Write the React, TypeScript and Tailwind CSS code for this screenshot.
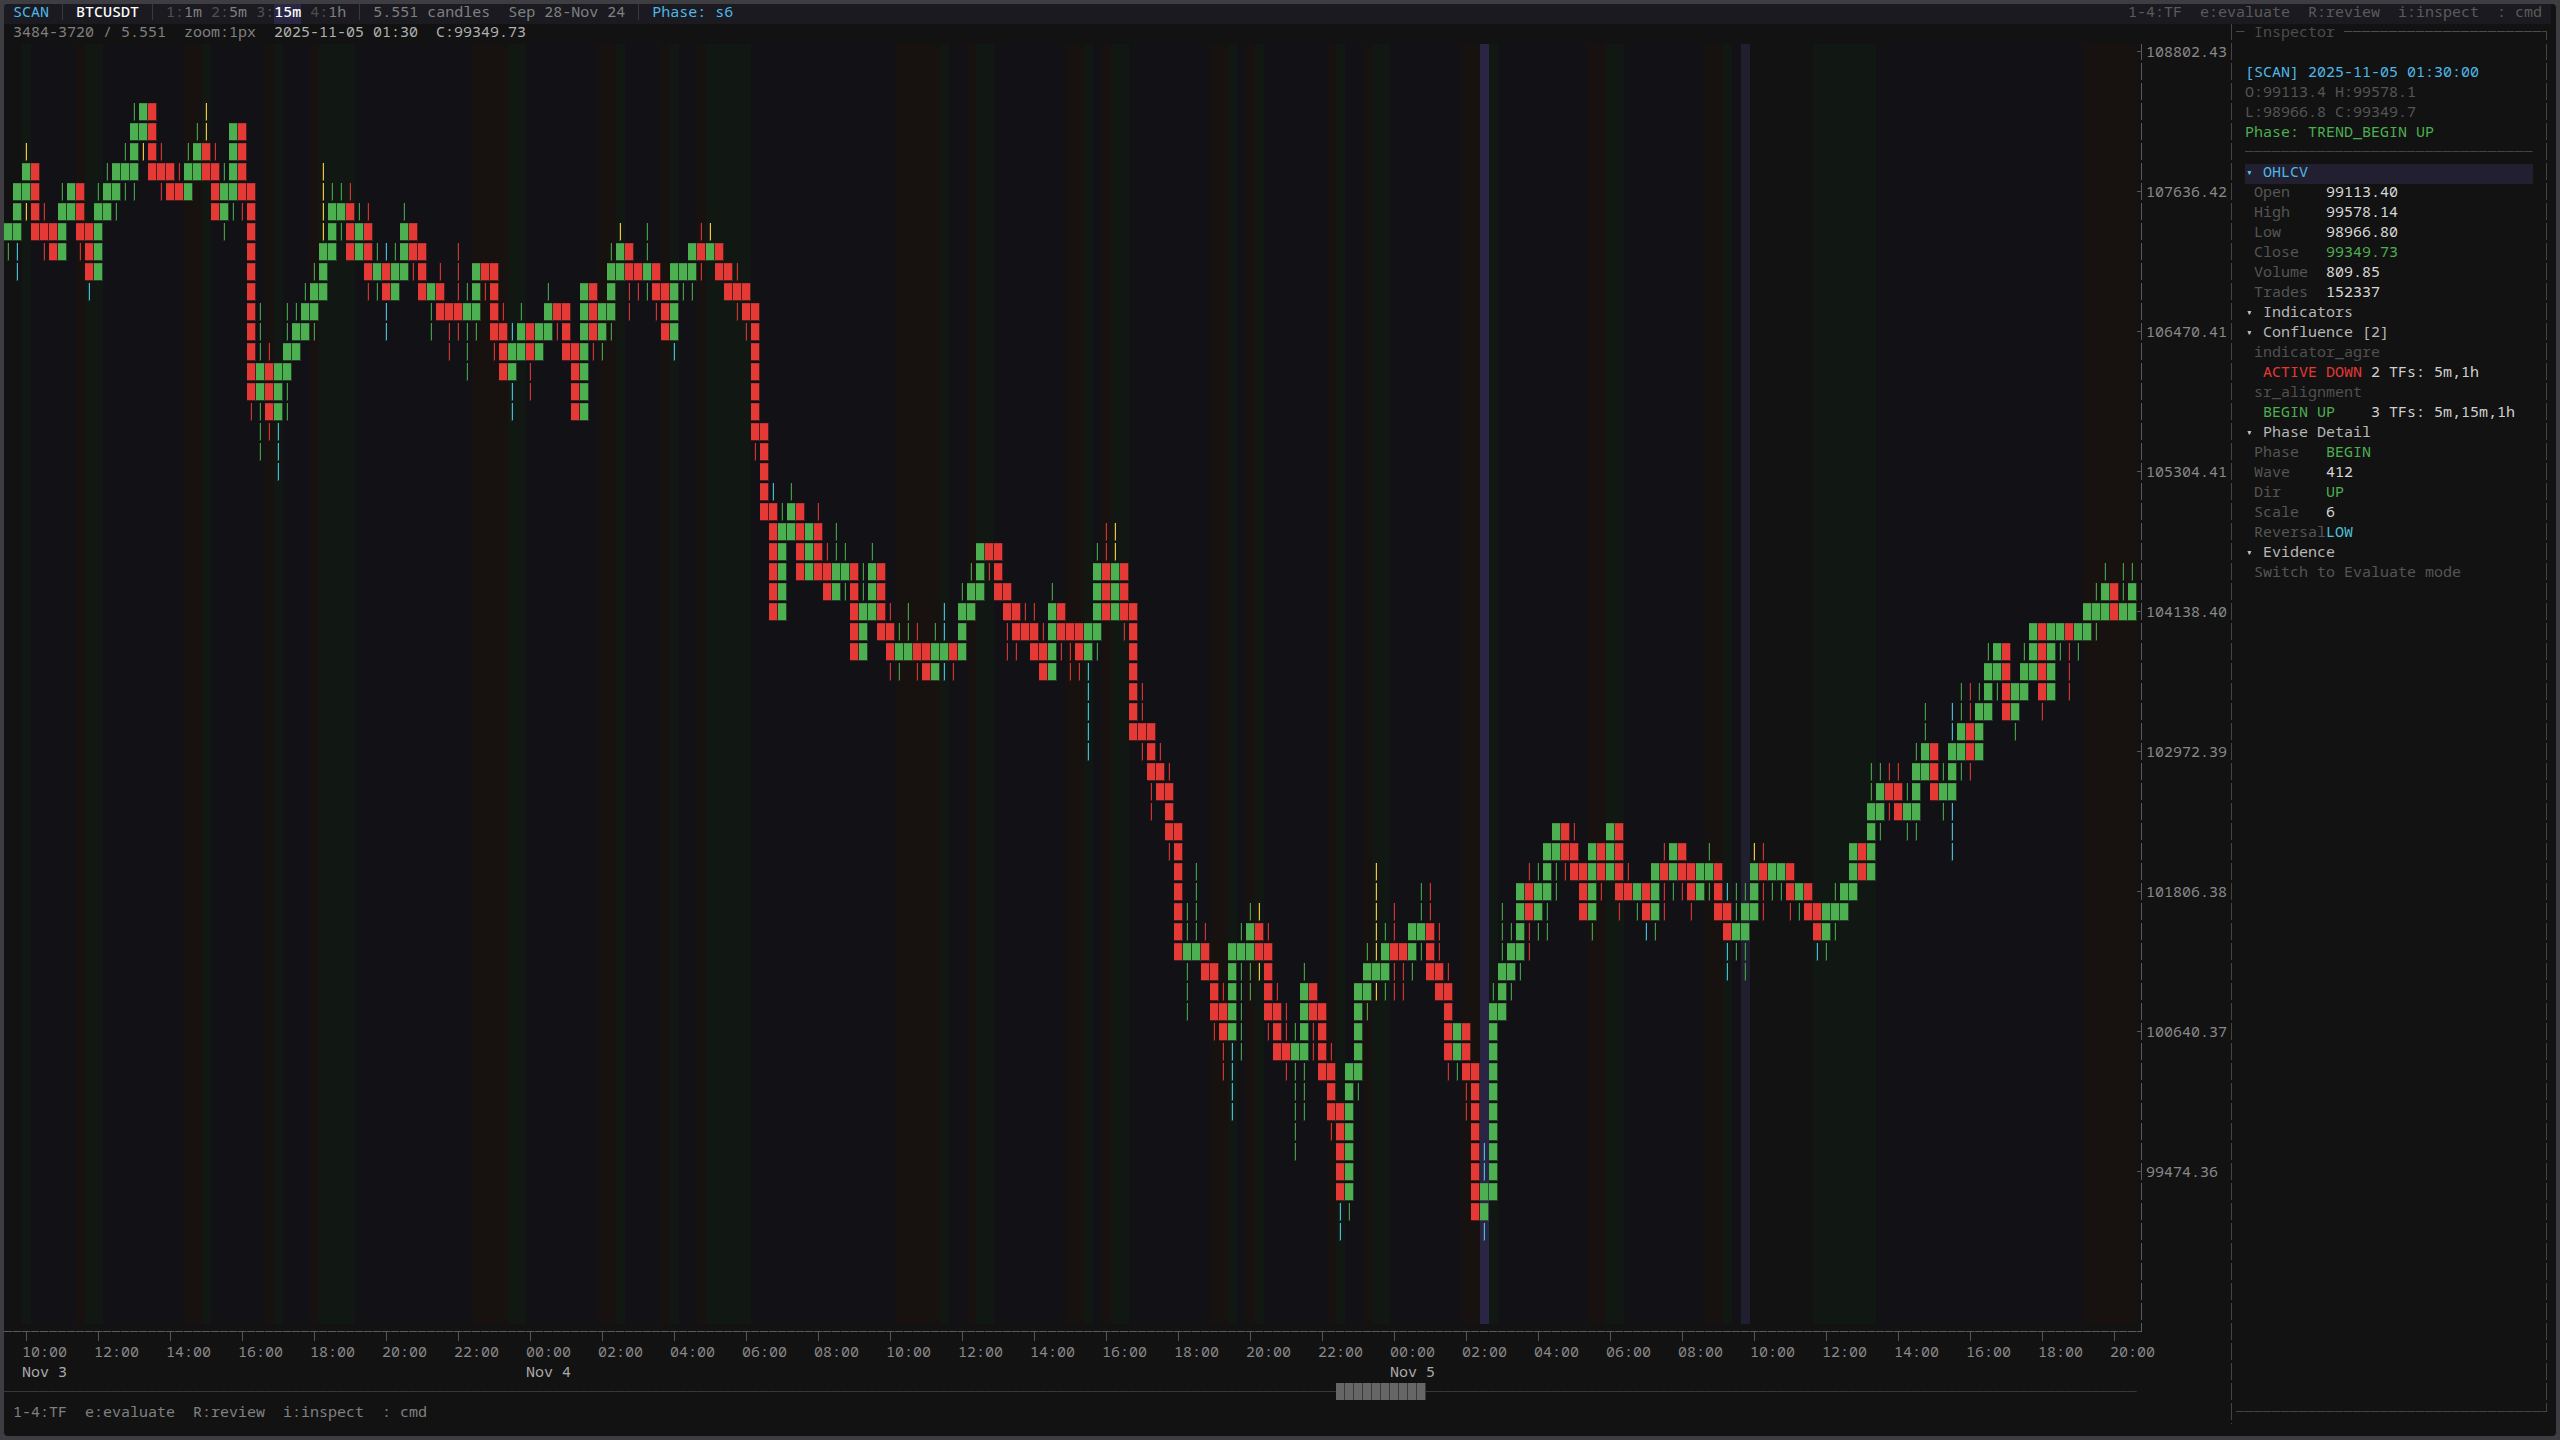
import React from "react";
import clsx from "clsx";

const COLS = 237;
const ROWS = 64;
const CELL_W = 9;
const CELL_H = 20;
const FIRST_ROW = 2;

// one candle per column: side (+ y/c swing marker), high, body top, body bottom, low
const CANDLES = `
g 11 11 11 12|gc 9 9 11 13|gy 7 8 9 10|r 8 8 11 11|r 10 11 11 12|r 11 11 12 12|g 9 10 12 12|g 9 9 10 10
r 9 9 11 12|rc 11 11 13 14|g 9 10 13 13|g 8 9 10 10|g 8 8 9 10|g 7 8 8 9|g 5 6 8 9|gy 5 5 6 7
r 5 5 8 8|r 7 8 8 9|r 8 8 9 9|r 8 9 9 9|g 7 8 9 9|g 6 7 8 8|ry 5 7 8 8|r 7 8 10 10
g 8 9 10 11|g 6 6 9 10|r 6 6 9 10|r 9 9 19 20|g 15 18 19 22|r 17 18 20 21|gc 18 18 20 23|g 15 17 18 20
g 15 16 17 17|g 14 15 16 16|g 13 14 15 16|gy 8 12 14 14|g 9 10 12 12|g 9 10 10 11|r 9 10 12 12|g 10 11 12 12
r 10 11 13 14|g 12 13 13 14|rc 12 13 14 16|g 12 13 14 14|g 10 11 13 13|r 11 11 12 13|r 12 12 14 14|g 14 14 14 16
r 13 14 15 15|r 15 15 15 17|r 12 15 15 16|g 14 15 15 18|g 13 13 15 16|r 13 13 13 14|r 13 13 16 17|r 15 16 18 18
gc 16 17 18 20|g 15 16 17 17|r 16 16 17 19|g 16 16 17 17|g 14 15 16 16|r 15 15 15 16|r 15 15 17 17|r 17 17 20 20
g 14 14 20 20|r 14 14 16 17|g 15 15 16 17|g 12 13 15 16|gy 11 12 13 13|r 12 12 13 15|r 13 13 13 14|g 11 13 13 14
r 13 13 14 15|r 14 14 16 16|gc 13 13 16 17|g 13 13 13 14|g 12 12 13 14|r 11 12 12 13|gy 11 12 12 12|r 12 12 13 13
r 13 13 14 14|r 13 14 14 15|r 14 14 15 16|r 15 15 21 22|r 21 21 25 25|rc 24 25 30 30|g 25 26 30 30|g 24 25 26 26
r 25 25 28 28|g 26 26 28 28|r 25 26 28 28|r 27 28 29 29|g 26 28 29 29|g 27 28 28 29|r 28 28 32 32|g 28 30 32 32
g 27 28 30 30|r 28 28 31 31|r 30 31 32 33|g 31 32 32 33|g 30 32 32 32|r 31 32 32 33|r 32 32 33 33|g 31 32 33 33
gc 30 32 32 33|r 32 32 32 33|g 29 30 32 32|g 28 29 30 30|g 27 27 29 29|r 27 27 27 28|r 27 27 29 29|r 29 29 30 32
r 30 30 31 32|r 30 31 31 31|r 30 31 32 32|r 31 32 33 33|g 29 30 33 33|r 30 30 31 32|r 31 31 31 33|r 31 31 32 33
gc 31 31 32 37|g 27 28 31 32|r 26 28 30 30|gy 26 28 30 30|r 28 28 30 31|r 30 30 36 36|r 34 36 36 37|r 36 36 38 40
r 37 38 39 39|r 38 39 41 42|r 41 41 47 47|g 45 47 47 50|g 43 47 47 47|r 46 47 48 48|r 48 48 50 51|r 49 50 51 53
gc 47 47 51 55|g 46 47 47 52|g 45 46 47 49|ry 45 46 47 48|r 46 47 50 51|r 49 50 52 52|r 50 52 52 53|g 51 52 52 57
g 48 49 52 55|r 49 49 50 52|r 50 50 53 53|r 52 53 55 56|rc 55 55 59 61|g 53 53 59 60|g 49 49 53 54|g 47 48 49 50
gy 43 48 48 49|g 46 47 48 49|r 45 47 47 49|r 47 47 47 49|g 46 46 47 48|g 44 46 46 47|r 44 46 48 48|r 46 48 49 49
r 48 49 52 53|g 51 51 52 53|r 51 51 53 55|r 53 53 60 60|gc 57 59 60 61|g 49 50 59 59|g 45 48 50 50|g 46 47 48 49
g 44 44 47 48|r 43 44 45 47|g 43 44 45 46|g 42 42 44 46|g 41 41 42 44|r 41 41 42 43|r 41 42 43 43|r 43 43 45 45
g 42 42 45 46|r 42 42 43 44|g 41 41 43 43|r 41 41 44 45|r 43 44 44 44|g 44 44 44 45|rc 44 44 45 46|g 43 43 45 46
r 42 43 43 45|g 42 42 43 44|r 42 42 43 44|r 43 43 44 45|g 43 43 44 44|g 42 43 43 44|r 43 43 45 45|rc 44 45 46 48
g 44 46 46 47|g 44 45 46 48|gy 42 43 45 45|r 42 43 43 45|g 43 43 43 44|g 43 43 43 44|r 43 43 44 45|g 44 44 44 45
r 44 44 45 45|rc 45 45 46 47|g 45 45 46 47|g 44 45 45 46|g 44 44 45 45|g 42 42 44 44|r 42 42 43 43|g 38 40 43 43
g 38 39 40 41|r 38 39 39 40|r 38 39 40 40|g 39 40 40 41|g 37 38 40 41|g 35 37 38 38|r 37 37 39 39|g 38 39 39 40
gc 35 37 39 42|g 34 36 37 38|r 34 36 37 38|g 34 35 37 37|g 32 33 35 35|g 32 32 33 34|r 32 32 35 35|g 34 34 35 36
g 32 33 34 34|g 31 31 33 33|r 31 31 34 35|g 31 31 34 34|g 31 31 31 32|r 31 31 31 34|g 31 31 31 32|g 30 30 31 31
g 29 30 30 31|g 28 29 30 30|r 29 29 30 30|g 28 30 30 30|g 28 29 30 30
`
  .trim()
  .split(/[|\n]/)
  .map((entry) => {
    const [kind, ...levels] = entry.split(" ");
    const [high, top, bottom, low] = levels.map(Number);
    return { side: kind[0], mark: kind[1], high, top, bottom, low };
  });

// phase shading as "kind + column count", left to right
const BANDS =
  "n2 u1 b5 d1 u2 b9 d2 u1 b6 d1 u1 b3 d1 u4 b13 d4 u2 b8 d2 u1 b4 d1 u1 b2 d1 u5 b16 d5 u1 b2 d1 u2 b8 d2 u1 b1 d1 u2 b9 d2 u1 b1 d1 u1 b7 d1 u1 b2 d1 u2 b8 d2 c1 u1 b10 d2 u2 b9 d2 u1 b1 s1 n7 u7 b23 d6";

const BAND_COLORS: Record<string, string> = {
  n: "#121212",
  b: "#111116",
  u: "#111712",
  d: "#171210",
  c: "#2a2545",
  s: "#201f30",
};

const BODY: Record<string, string> = { g: "#4caf50", r: "#e53935" };
const WICK: Record<string, string> = {
  g: "#439b47",
  r: "#cb3431",
  y: "#f0c33c",
  c: "#48b9d0",
};

const PRICES = [
  "108802.43",
  "107636.42",
  "106470.41",
  "105304.41",
  "104138.40",
  "102972.39",
  "101806.38",
  "100640.37",
  "99474.36",
];

const DAYS: Record<number, string> = { 0: "Nov 3", 7: "Nov 4", 19: "Nov 5" };
const TICKS = Array.from({ length: 30 }, (_, i) => ({
  time: `${String((10 + i * 2) % 24).padStart(2, "0")}:00`,
  day: DAYS[i],
}));

const HINTS = "1-4:TF  e:evaluate  R:review  i:inspect  : cmd";

const TIMEFRAMES = [
  { key: "1", label: "1m" },
  { key: "2", label: "5m" },
  { key: "3", label: "15m" },
  { key: "4", label: "1h" },
];

const range = (from: number, to: number) =>
  Array.from({ length: Math.max(0, to - from) }, (_, i) => from + i);

const Chart = () => {
  let col = 0;
  const bands = BANDS.split(" ").map((b) => {
    const size = Number(b.slice(1));
    const band = { x: col * CELL_W, w: size * CELL_W, fill: BAND_COLORS[b[0]] };
    col += size;
    return band;
  });

  return (
    <svg
      className="block h-full w-full"
      viewBox={`0 0 ${COLS * CELL_W} ${ROWS * CELL_H}`}
      preserveAspectRatio="none"
      shapeRendering="crispEdges"
      role="img"
      aria-label="BTCUSDT 15m"
    >
      {bands.map((b) => (
        <rect key={b.x} x={b.x} y={0} width={b.w} height={ROWS * CELL_H} fill={b.fill} />
      ))}
      {CANDLES.map((c, i) => {
        const x = i * CELL_W;
        const body = BODY[c.side];
        const wick = WICK[c.mark || c.side];
        const y = (row: number) => (row - FIRST_ROW) * CELL_H;
        return (
          <g key={i}>
            {range(c.top, c.bottom + 1).map((row) => (
              <g key={row} fill={body}>
                <rect x={x} y={y(row) - 1} width={9} height={18} opacity={0.3} />
                <rect x={x} y={y(row) - 1} width={8} height={1} opacity={0.75} />
                <rect x={x} y={y(row)} width={8} height={16} />
              </g>
            ))}
            {[...range(c.high, c.top), ...range(c.bottom + 1, c.low + 1)].map((row) => (
              <g key={row} fill={wick}>
                <rect x={x + 3} y={y(row) - 1} width={1} height={18} opacity={0.2} />
                <rect x={x + 4} y={y(row) - 1} width={1} height={17} />
                <rect x={x + 4} y={y(row) + 16} width={1} height={1} opacity={0.4} />
              </g>
            ))}
          </g>
        );
      })}
    </svg>
  );
};

const VLine = ({ bright }: { bright?: boolean }) => (
  <div className="flex w-[9px] shrink-0 pl-1">
    <div
      className={clsx(
        "w-px bg-[repeating-linear-gradient(to_bottom,currentColor_0_16px,transparent_16px_19px,currentColor_19px_20px)]",
        bright ? "text-[#5a5a5a]" : "text-[#444444]"
      )}
    />
  </div>
);

const HLine = ({ className }: { className?: string }) => (
  <div className={clsx("flex h-5 pt-[7px]", className)}>
    <div className="h-px flex-1 bg-[repeating-linear-gradient(to_right,currentColor_0_8px,#2c2c2c_8px_9px)]" />
  </div>
);

const Pipe = ({ className }: { className?: string }) => (
  <span className={clsx("flex h-4 w-[9px] pl-1", className)}>
    <span className="w-px bg-[#3a3a3a]" />
  </span>
);

const PriceAxis = () => (
  <div className="flex w-[90px] shrink-0">
    <VLine bright />
    <div className="flex flex-1 flex-col text-[#888888]">
      {PRICES.map((price, i) => (
        <div key={price} className={clsx("flex", i === PRICES.length - 1 ? "flex-[8]" : "flex-[7]")}>
          <span className="mt-[7px] -ml-[9px] h-px w-1 bg-[#555555]" />
          <span className="pl-[5px]">{price}</span>
        </div>
      ))}
    </div>
  </div>
);

const TimeAxis = () => (
  <div>
    <div className="flex h-5">
      <HLine className="flex-1 text-[#5a5a5a]" />
      <div className="w-[90px]">
        <div className="h-2 w-[5px] border-r border-b border-[#5a5a5a]" />
      </div>
    </div>
    <div className="-mt-3 mr-[90px] flex h-13">
      <div className="flex-[2]" />
      {TICKS.map((t, i) => (
        <div
          key={i}
          className={clsx("min-w-0 whitespace-nowrap", i === TICKS.length - 1 ? "flex-[3]" : "flex-[8]")}
        >
          <div className="h-3 pl-1">
            <div className="h-[9px] w-px bg-[#555555]" />
          </div>
          <div className="h-5 text-[#888888]">{t.time}</div>
          <div className="h-5 text-[#aaaaaa]">{t.day}</div>
        </div>
      ))}
    </div>
  </div>
);

const Scroller = () => (
  <div className="mr-[90px] flex h-5">
    <HLine className="flex-[148] text-[#383838]" />
    <div className="-mt-px h-[17px] flex-[10] bg-[repeating-linear-gradient(to_right,#666666_0_8px,#3a3a3a_8px_9px)]" />
    <HLine className="flex-[79] text-[#383838]" />
  </div>
);

type SectionProps = { title: string; active?: boolean; children?: React.ReactNode };

const Section = ({ title, active, children }: SectionProps) => (
  <section>
    <button
      type="button"
      aria-expanded="true"
      className={clsx(
        "flex h-5 w-full text-left",
        active ? "bg-[#211f30] text-[#4fb8e8]" : "text-[#b8b8b8]"
      )}
    >
      <svg className="mt-[7px] mr-[9px] block" width="9" height="5" viewBox="0 0 9 5">
        <path d="M2.4 0h4L5 3.6H3.8z" fill="currentColor" />
      </svg>
      {title}
    </button>
    <div className="pl-[9px]">{children}</div>
  </section>
);

const Field = ({ name, value, tone }: { name: string; value: string; tone?: string }) => (
  <div className="flex h-5">
    <dt className="w-18 text-[#555555]">{name}</dt>
    <dd className={tone || "text-[#d8d8d8]"}>{value}</dd>
  </div>
);

const Signal = ({ name, state, tone, note }: { name: string; state: string; tone: string; note: string }) => (
  <div>
    <div className="h-5 text-[#505050]">{name}</div>
    <div className="flex h-5 pl-[9px]">
      <span className={clsx("w-27", tone)}>{state}</span>
      <span className="text-[#d0d0d0]">{note}</span>
    </div>
  </div>
);

const Inspector = () => (
  <aside className="flex w-[324px] shrink-0 flex-col pb-3">
    <div className="flex h-5 text-[#4c4c4c]">
      <VLine />
      <HLine className="w-[9px]" />
      <h2 className="px-[9px]">Inspector</h2>
      <HLine className="flex-1" />
      <div className="mt-[7px] mr-1 h-[9px] w-[5px] border-t border-r border-[#444444]" />
    </div>
    <div className="flex flex-1">
      <VLine />
      <div className="flex-1 px-[9px] pt-5">
        <p className="h-5 text-[#4fb8e8]">[SCAN] 2025-11-05 01:30:00</p>
        <p className="h-5 text-[#555555]">O:99113.4 H:99578.1</p>
        <p className="h-5 text-[#555555]">L:98966.8 C:99349.7</p>
        <p className="h-5 text-[#4caf50]">Phase: TREND_BEGIN UP</p>
        <HLine className="text-[#444444]" />
        <Section title="OHLCV" active>
          <dl>
            <Field name="Open" value="99113.40" />
            <Field name="High" value="99578.14" />
            <Field name="Low" value="98966.80" />
            <Field name="Close" value="99349.73" tone="text-[#4caf50]" />
            <Field name="Volume" value="809.85" />
            <Field name="Trades" value="152337" />
          </dl>
        </Section>
        <Section title="Indicators" />
        <Section title="Confluence [2]">
          <Signal name="indicator_agre" state="ACTIVE DOWN" tone="text-[#e53935]" note="2 TFs: 5m,1h" />
          <Signal name="sr_alignment" state="BEGIN UP" tone="text-[#4caf50]" note="3 TFs: 5m,15m,1h" />
        </Section>
        <Section title="Phase Detail">
          <dl>
            <Field name="Phase" value="BEGIN" tone="text-[#4caf50]" />
            <Field name="Wave" value="412" />
            <Field name="Dir" value="UP" tone="text-[#4caf50]" />
            <Field name="Scale" value="6" />
            <Field name="Reversal" value="LOW" tone="text-[#4cc4d8]" />
          </dl>
        </Section>
        <Section title="Evidence">
          <p className="h-5 text-[#555555]">Switch to Evaluate mode</p>
        </Section>
      </div>
      <VLine />
    </div>
    <div className="flex h-5 text-[#444444]">
      <VLine />
      <HLine className="flex-1" />
      <div className="mr-1 h-2 w-[5px] border-r border-b border-[#444444]" />
    </div>
  </aside>
);

const Header = () => (
  <header className="mr-[5px] flex h-5 rounded-tl-sm bg-[#1a1a20] px-[9px] text-[#808080]">
    <span className="text-[#4fb8e8]">SCAN</span>
    <Pipe className="mx-[9px]" />
    <h1 className="font-medium text-white">BTCUSDT</h1>
    <Pipe className="mx-[9px]" />
    <nav className="flex gap-[9px]">
      {TIMEFRAMES.map((tf) => {
        const current = tf.label === "15m";
        return (
          <button key={tf.key} type="button" className="flex" aria-pressed={current}>
            <span className="text-[#505050]">{tf.key}:</span>
            <span className={clsx(current && "h-5 bg-[#2a2745] font-medium text-white")}>{tf.label}</span>
          </button>
        );
      })}
    </nav>
    <Pipe className="mx-[9px]" />
    <span className="whitespace-pre">5.551 candles  Sep 28-Nov 24</span>
    <Pipe className="mx-[9px]" />
    <span className="text-[#4fb8e8]">Phase: s6</span>
    <span className="ml-auto whitespace-pre text-[#5a5a5a]">{HINTS}</span>
  </header>
);

export default function App() {
  return (
    <div className="h-screen bg-[#3e3d42] p-1 font-['Noto_Sans_Mono','Liberation_Mono',monospace] text-[15px] leading-[14px]">
      <div className="flex h-full flex-col rounded-sm bg-[#121212]">
        <Header />
        <div className="flex min-h-0 flex-1 pr-[5px]">
          <main className="flex min-w-0 flex-1 flex-col pb-3">
            <div className="flex h-5 gap-[18px] pl-[9px] text-[#808080]">
              <span>3484-3720 / 5.551</span>
              <span>zoom:1px</span>
              <span className="text-[#b0b0b0]">2025-11-05 01:30</span>
              <span className="text-[#b0b0b0]">C:99349.73</span>
            </div>
            <div className="flex min-h-0 flex-1">
              <div className="min-w-0 flex-1">
                <Chart />
              </div>
              <PriceAxis />
            </div>
            <TimeAxis />
            <Scroller />
            <footer className="h-5 pl-[9px] whitespace-pre text-[#808080]">{HINTS}</footer>
          </main>
          <Inspector />
        </div>
      </div>
    </div>
  );
}
